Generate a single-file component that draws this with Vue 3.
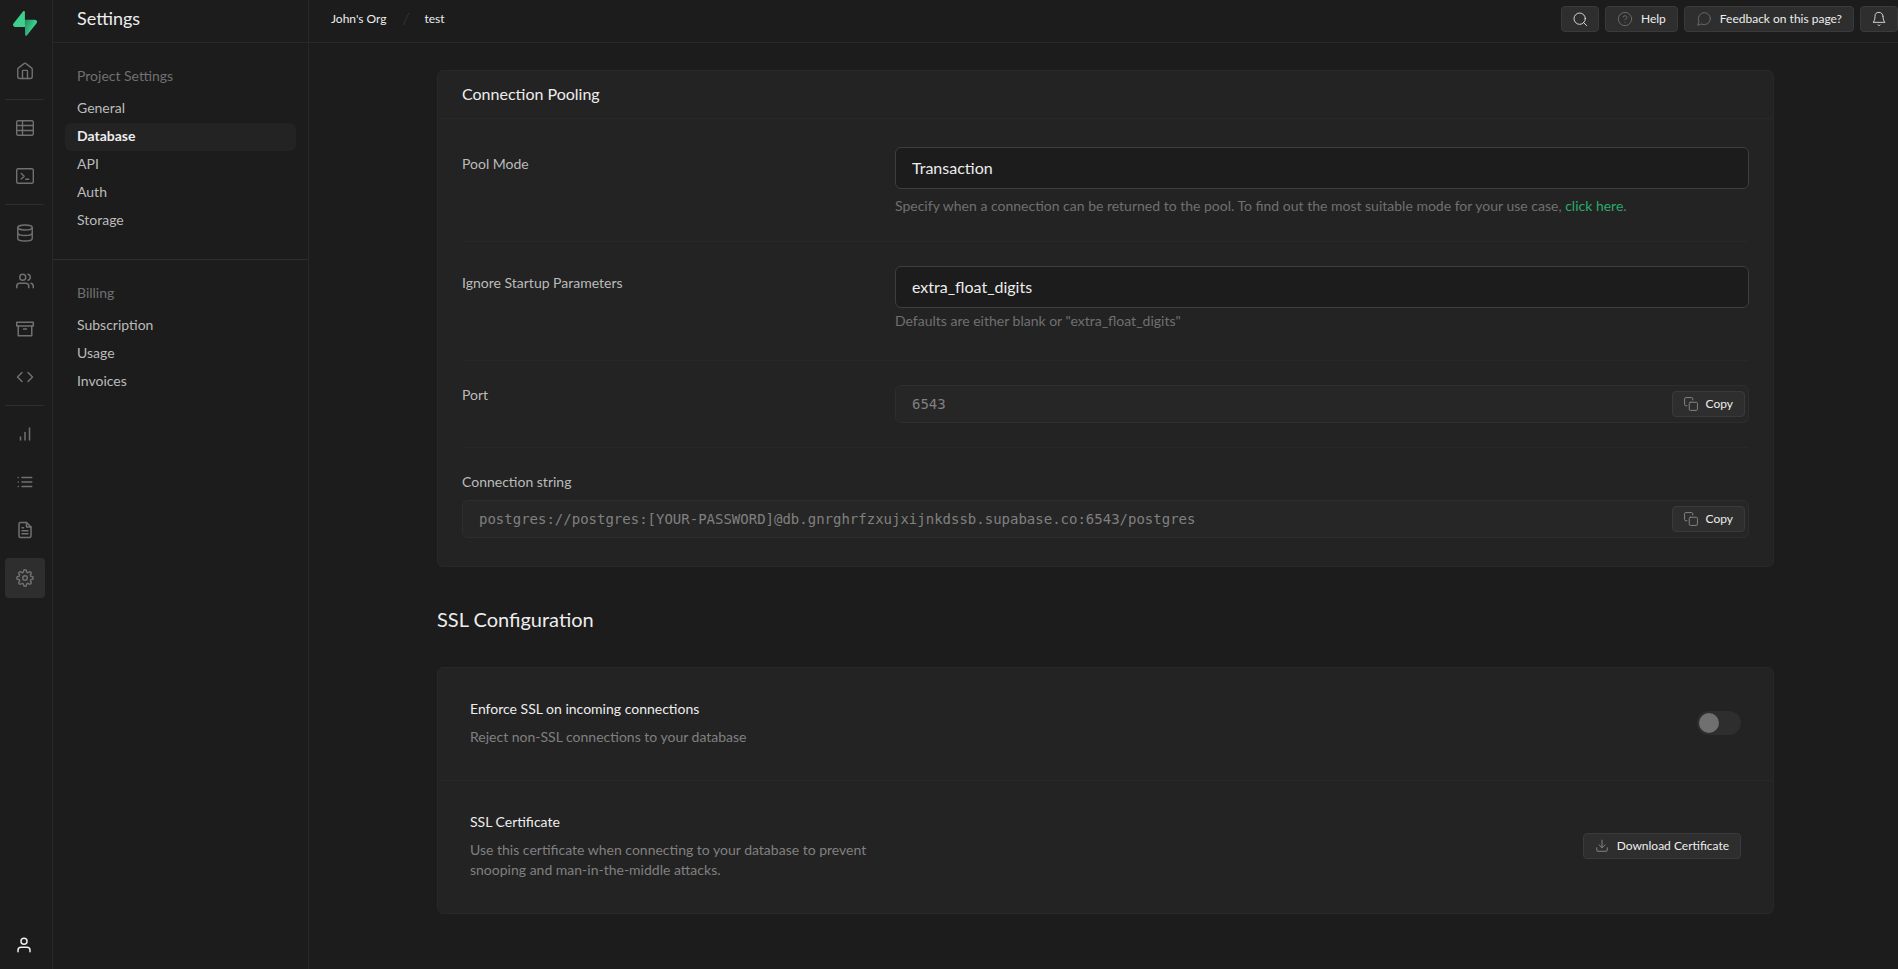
<template>
    <div class="layout">
        <nav class="rail" aria-label="Main">
            <a href="#" class="rail-item" aria-label="Supabase">
                <svg class="logo" viewBox="0 0 109 113" fill="none">
                    <defs>
                        <linearGradient id="bolt" x1="53.97" y1="54.97" x2="94.16" y2="71.83"
                            gradientUnits="userSpaceOnUse">
                            <stop stop-color="#249361" />
                            <stop offset="1" stop-color="#3ECF8E" />
                        </linearGradient>
                    </defs>
                    <path
                        d="M63.7 110.3C60.8 113.9 55 111.9 55 107.3L54 40H99.2C107.4 40 112 49.5 106.9 55.9L63.7 110.3Z"
                        fill="url(#bolt)" />
                    <path
                        d="M45.3 2C48.2 -1.5 54 .4 54 5L54.5 72.3H9.8C1.6 72.3 -2.9 62.8 2.2 56.4L45.3 2Z"
                        fill="#3ECF8E" />
                </svg>
            </a>
            <template v-for="(group, index) in railGroups" :key="index">
                <hr v-if="index > 0" class="rail-line" />
                <a v-for="item in group" :key="item.name" href="#" class="rail-item"
                    :class="{ active: item.name === 'Settings' }" :aria-label="item.name">
                    <svg :class="item.box === 20 ? 'icon-custom' : 'icon-rail'"
                        :viewBox="`0 0 ${item.box || 24} ${item.box || 24}`">
                        <path v-for="d in item.paths" :key="d" :d="d" />
                    </svg>
                </a>
            </template>
            <button type="button" class="rail-item account" aria-label="Account">
                <svg class="icon-rail" viewBox="0 0 24 24">
                    <path d="M20 21v-2a4 4 0 0 0-4-4H8a4 4 0 0 0-4 4v2" />
                    <circle cx="12" cy="7" r="4" />
                </svg>
            </button>
        </nav>

        <aside class="side">
            <div class="side-title">
                <h1>Settings</h1>
            </div>
            <section v-for="menu in menus" :key="menu.title" class="menu">
                <h2>{{ menu.title }}</h2>
                <ul>
                    <li v-for="link in menu.links" :key="link">
                        <a href="#" :class="{ current: link === activeLink }" @click.prevent="activeLink = link">{{ link }}</a>
                    </li>
                </ul>
            </section>
        </aside>

        <div class="page">
            <header class="topbar">
                <div class="crumbs">
                    <a href="#">John's Org</a>
                    <svg class="slash" viewBox="0 0 24 24">
                        <path d="M16 3.5L8 20.5" />
                    </svg>
                    <a href="#">test</a>
                </div>
                <div class="actions">
                    <button type="button" class="btn square" aria-label="Search">
                        <svg class="icon-top bright" viewBox="0 0 24 24">
                            <circle cx="11.5" cy="11.5" r="8.5" />
                            <path d="M22 22l-4.5-4.5" />
                        </svg>
                    </button>
                    <button type="button" class="btn">
                        <svg class="icon-top" viewBox="0 0 24 24">
                            <circle cx="12" cy="12" r="10" />
                            <path d="M9.1 9a3 3 0 0 1 5.8 1c0 2-3 3-3 3M12 17h.01" />
                        </svg>
                        Help
                    </button>
                    <button type="button" class="btn">
                        <svg class="icon-top" viewBox="0 0 24 24">
                            <path
                                d="M21.5 11.5a9 9 0 0 1-1 4 9 9 0 0 1-8 5 9 9 0 0 1-4-1L2.5 21.5l2-6a9 9 0 0 1-1-4 9 9 0 0 1 5-8 9 9 0 0 1 4-1h.5a9 9 0 0 1 8.5 8.5z" />
                        </svg>
                        Feedback on this page?
                    </button>
                    <button type="button" class="btn square" aria-label="Notifications">
                        <svg class="icon-top bright" viewBox="0 0 24 24">
                            <path d="M18 8A6 6 0 0 0 6 8c0 7-3 9-3 9h18s-3-2-3-9M13.7 21a2 2 0 0 1-3.4 0" />
                        </svg>
                    </button>
                </div>
            </header>

            <main class="content">
                <section class="card">
                    <h2 class="card-title">Connection Pooling</h2>
                    <div class="rows">
                        <div class="row">
                            <label for="pool-mode" class="row-label">Pool Mode</label>
                            <div class="row-field">
                                <select id="pool-mode" v-model="poolMode" class="control">
                                    <option>Transaction</option>
                                    <option>Session</option>
                                    <option>Statement</option>
                                </select>
                                <p class="hint spaced">Specify when a connection can be returned to the pool. To find out
                                    the most suitable mode for your use case, <a href="#">click here</a>.</p>
                            </div>
                        </div>
                        <div class="row">
                            <label for="ignore-params" class="row-label">Ignore Startup Parameters</label>
                            <div class="row-field tall">
                                <input id="ignore-params" v-model="ignoreParams" type="text" class="control" />
                                <p class="hint">Defaults are either blank or "extra_float_digits"</p>
                            </div>
                        </div>
                        <div class="row">
                            <label for="port" class="row-label top">Port</label>
                            <div class="row-field copy-box">
                                <input id="port" type="text" readonly value="6543" />
                                <button type="button" class="btn" @click="copy('6543')">
                                    <svg class="icon-small" viewBox="0 0 24 24">
                                        <rect x="9" y="9" width="14" height="14" rx="2" />
                                        <path d="M5 15H3a2 2 0 0 1-2-2V3a2 2 0 0 1 2-2h10a2 2 0 0 1 2 2v2" />
                                    </svg>
                                    Copy
                                </button>
                            </div>
                        </div>
                        <div class="row stacked">
                            <label for="connection" class="row-label top">Connection string</label>
                            <div class="copy-box">
                                <input id="connection" type="text" readonly :value="connection" />
                                <button type="button" class="btn" @click="copy(connection)">
                                    <svg class="icon-small" viewBox="0 0 24 24">
                                        <rect x="9" y="9" width="14" height="14" rx="2" />
                                        <path d="M5 15H3a2 2 0 0 1-2-2V3a2 2 0 0 1 2-2h10a2 2 0 0 1 2 2v2" />
                                    </svg>
                                    Copy
                                </button>
                            </div>
                        </div>
                    </div>
                </section>

                <h2 class="section-title">SSL Configuration</h2>

                <section class="card">
                    <div class="ssl-row">
                        <div class="ssl-text">
                            <label for="enforce-ssl">Enforce SSL on incoming connections</label>
                            <p>Reject non-SSL connections to your database</p>
                        </div>
                        <input id="enforce-ssl" v-model="enforceSsl" type="checkbox" role="switch" class="toggle" />
                    </div>
                    <div class="ssl-row">
                        <div class="ssl-text">
                            <h3>SSL Certificate</h3>
                            <p>Use this certificate when connecting to your database to prevent snooping and
                                man-in-the-middle attacks.</p>
                        </div>
                        <button type="button" class="btn">
                            <svg class="icon-small" viewBox="0 0 24 24">
                                <path d="M21 15v4a2 2 0 0 1-2 2H5a2 2 0 0 1-2-2v-4M7 10l5 5 5-5M12 15V2" />
                            </svg>
                            Download Certificate
                        </button>
                    </div>
                </section>
            </main>
        </div>
    </div>
</template>

<script setup>
import { ref } from 'vue';

const railGroups = [
    [
        {
            name: 'Home',
            box: 20,
            paths: [
                'M2.75 8.2v7.3a2 2 0 0 0 2 2h10.5a2 2 0 0 0 2-2V8.2a1.5 1.5 0 0 0-.5-1.1L11 2.6a1.5 1.5 0 0 0-2 0L3.3 7.1a1.5 1.5 0 0 0-.55 1.1z',
                'M7.5 17.5V10a.6.6 0 0 1 .6-.6h3.8a.6.6 0 0 1 .6.6v7.5',
            ],
        },
    ],
    [
        {
            name: 'Table Editor',
            box: 20,
            paths: [
                'M3.2 2.75h13.6a1.5 1.5 0 0 1 1.5 1.5v11.5a1.5 1.5 0 0 1-1.5 1.5H3.2a1.5 1.5 0 0 1-1.5-1.5V4.25a1.5 1.5 0 0 1 1.5-1.5z',
                'M1.7 7.5h16.6M1.7 12.5h16.6M7.5 2.75v14.5',
            ],
        },
        {
            name: 'SQL Editor',
            box: 20,
            paths: [
                'M3.2 2.75h13.6a1.5 1.5 0 0 1 1.5 1.5v11.5a1.5 1.5 0 0 1-1.5 1.5H3.2a1.5 1.5 0 0 1-1.5-1.5V4.25a1.5 1.5 0 0 1 1.5-1.5z',
                'M6.2 7.5l3 2.7-3 2.7M10.7 13.2h3',
            ],
        },
    ],
    [
        {
            name: 'Database',
            box: 20,
            paths: [
                'M17.25 4.5c0 1.4-3.2 2.5-7.25 2.5S2.75 5.9 2.75 4.5 5.95 2 10 2s7.25 1.1 7.25 2.5z',
                'M2.75 4.5v11c0 1.4 3.2 2.5 7.25 2.5s7.25-1.1 7.25-2.5v-11',
                'M2.75 10c0 1.4 3.2 2.5 7.25 2.5s7.25-1.1 7.25-2.5',
            ],
        },
        {
            name: 'Authentication',
            paths: [
                'M17 21v-2a4 4 0 0 0-4-4H5a4 4 0 0 0-4 4v2',
                'M13 7a4 4 0 1 1-8 0 4 4 0 0 1 8 0z',
                'M23 21v-2a4 4 0 0 0-3-3.87M16 3.13a4 4 0 0 1 0 7.75',
            ],
        },
        {
            name: 'Storage',
            paths: ['M21 8v13H3V8', 'M1 3h22v5H1z', 'M10 12h4'],
        },
        {
            name: 'Edge Functions',
            paths: ['M16 18l6-6-6-6', 'M8 6l-6 6 6 6'],
        },
    ],
    [
        {
            name: 'Reports',
            paths: ['M12 20V10', 'M18 20V4', 'M6 20v-4'],
        },
        {
            name: 'Logs',
            paths: ['M8 6h13M8 12h13M8 18h13', 'M3 6h.01M3 12h.01M3 18h.01'],
        },
        {
            name: 'API Docs',
            paths: [
                'M14 2H6a2 2 0 0 0-2 2v16a2 2 0 0 0 2 2h12a2 2 0 0 0 2-2V8z',
                'M14 2v6h6',
                'M16 13H8M16 17H8M10 9H8',
            ],
        },
        {
            name: 'Settings',
            paths: [
                'M15 12a3 3 0 1 1-6 0 3 3 0 0 1 6 0z',
                'M19.4 15a1.65 1.65 0 0 0 .33 1.82l.06.06a2 2 0 1 1-2.83 2.83l-.06-.06a1.65 1.65 0 0 0-2.8 1.17V21a2 2 0 0 1-4 0v-.09A1.65 1.65 0 0 0 9 19.4a1.65 1.65 0 0 0-1.82.33l-.06.06a2 2 0 1 1-2.83-2.83l.06-.06A1.65 1.65 0 0 0 3.18 14H3a2 2 0 0 1 0-4h.09A1.65 1.65 0 0 0 4.6 9a1.65 1.65 0 0 0-.33-1.82l-.06-.06a2 2 0 1 1 2.83-2.83l.06.06A1.65 1.65 0 0 0 9 4.68 1.65 1.65 0 0 0 10 3.17V3a2 2 0 0 1 4 0v.09a1.65 1.65 0 0 0 2.82 1.26l.06-.06a2 2 0 1 1 2.83 2.83l-.06.06A1.65 1.65 0 0 0 20.83 10H21a2 2 0 0 1 0 4h-.09a1.65 1.65 0 0 0-1.51 1z',
            ],
        },
    ],
];

const menus = [
    { title: 'Project Settings', links: ['General', 'Database', 'API', 'Auth', 'Storage'] },
    { title: 'Billing', links: ['Subscription', 'Usage', 'Invoices'] },
];

const activeLink = ref('Database');
const poolMode = ref('Transaction');
const ignoreParams = ref('extra_float_digits');
const enforceSsl = ref(false);
const connection = 'postgres://postgres:[YOUR-PASSWORD]@db.gnrghrfzxujxijnkdssb.supabase.co:6543/postgres';

const copy = (text) => {
    navigator.clipboard?.writeText(text);
};
</script>

<style>
body {
    background: #1c1c1c;
}
</style>

<style scoped>
* {
    box-sizing: border-box;
}

.layout {
    display: flex;
    min-height: 100vh;
    background: #1c1c1c;
    color: #ededed;
    font-family: Lato, "Open Sans", sans-serif;
    font-size: 14px;
    line-height: 20px;
}

h1,
h2,
h3,
p,
ul {
    margin: 0;
    padding: 0;
    font-weight: 400;
    list-style: none;
}

a {
    color: inherit;
    text-decoration: none;
}

button,
input,
select {
    font-family: inherit;
    color: inherit;
}

svg {
    flex: none;
    fill: none;
    stroke: currentColor;
    stroke-linecap: round;
    stroke-linejoin: round;
}

.rail {
    display: flex;
    flex: none;
    flex-direction: column;
    gap: 8px;
    width: 53px;
    padding: 3px 7px 4px 5px;
    border-right: 1px solid #282828;
}

.rail-item {
    display: flex;
    align-items: center;
    justify-content: center;
    width: 40px;
    height: 40px;
    border-radius: 4px;
    color: #707070;
}

.rail-item.active {
    background: #2e2e2e;
}

.rail-line {
    width: 39px;
    height: 1px;
    margin: 0;
    border: 0;
    background: #2e2e2e;
}

.account {
    margin-top: auto;
    padding: 0 2px 0 0;
    border: 0;
    background: none;
    color: #ededed;
}

.logo {
    width: 24px;
    height: 25px;
    stroke: none;
}

.icon-rail {
    width: 18px;
    height: 18px;
    stroke-width: 2;
}

.icon-custom {
    width: 20px;
    height: 20px;
    stroke-width: 1.4;
}

.side {
    flex: none;
    width: 256px;
    border-right: 1px solid #282828;
}

.side-title {
    display: flex;
    align-items: center;
    height: 43px;
    padding: 0 24px 6px;
    border-bottom: 1px solid #282828;
}

.side-title h1 {
    font-size: 18px;
}

.menu {
    padding: 23px 12px 24px;
}

.menu + .menu {
    border-top: 1px solid #2e2e2e;
}

.menu h2 {
    padding: 0 12px 9px;
    color: #707070;
    font-size: 14px;
}

.menu a {
    display: block;
    padding: 3px 12px 5px;
    border-radius: 6px;
    color: #bbbbbb;
}

.menu a.current {
    background: #232323;
    color: #ededed;
    font-weight: 700;
}

.page {
    flex: 1;
    min-width: 0;
}

.topbar {
    display: flex;
    align-items: center;
    justify-content: space-between;
    height: 43px;
    padding: 0 0 4px 22px;
    border-bottom: 1px solid #282828;
}

.crumbs {
    display: flex;
    align-items: center;
    gap: 11px;
    font-size: 12px;
}

.slash {
    width: 16px;
    height: 16px;
    color: #3e3e3e;
    stroke-width: 1;
}

.actions {
    display: flex;
    gap: 6px;
}

.btn {
    display: flex;
    flex: none;
    align-items: center;
    gap: 8px;
    height: 26px;
    padding: 0 11px;
    border: 1px solid #3a3a3a;
    border-radius: 4px;
    background: #2e2e2e;
    color: #ededed;
    font-size: 12px;
    line-height: 16px;
    cursor: pointer;
}

.btn.square {
    padding: 0 10px;
}

.icon-top {
    width: 16px;
    height: 16px;
    color: #707070;
    stroke-width: 1.3;
}

.bright {
    color: #ededed;
}

.icon-small {
    width: 14px;
    height: 14px;
    color: #8f8f8f;
    stroke-width: 1.5;
}

.content {
    padding: 27px 124px 54px 128px;
}

.card {
    border: 1px solid #282828;
    border-radius: 6px;
    background: #232323;
}

.card-title {
    padding: 11px 24px 12px;
    border-bottom: 1px solid #282828;
    font-size: 16px;
    line-height: 24px;
}

.rows {
    padding: 4px 24px;
}

.row {
    display: grid;
    grid-template-columns: repeat(12, 1fr);
    column-gap: 12px;
    padding: 24px 0;
}

.row + .row {
    border-top: 1px solid #282828;
}

.row-label {
    grid-column: span 4;
    padding-top: 7px;
    color: #bbbbbb;
}

.row-label.top {
    padding-top: 0;
}

.row-field {
    grid-column: span 8;
}

.row-field.tall {
    min-height: 70px;
}

.row.stacked {
    display: flex;
    flex-direction: column;
    gap: 8px;
}

.control {
    display: block;
    width: 100%;
    height: 42px;
    padding: 0 16px 2px;
    border: 1px solid #3e3e3e;
    border-radius: 6px;
    background: #1c1c1c;
    color: #ededed;
    font-size: 16px;
    appearance: none;
}

.hint {
    padding: 3px 0 1px;
    color: #707070;
}

.hint.spaced {
    padding-top: 7px;
}

.hint a {
    color: #2aa96b;
}

.copy-box {
    display: flex;
    align-items: center;
    height: 38px;
    padding-right: 3px;
    border: 1px solid #2e2e2e;
    border-radius: 6px;
    background: #262626;
}

.copy-box input {
    flex: 1;
    min-width: 0;
    padding: 0 16px;
    border: 0;
    outline: 0;
    background: none;
    color: #808080;
    font-family: "DejaVu Sans Mono", monospace;
    font-size: 14px;
}

.section-title {
    padding: 38px 0 34px;
    font-size: 20px;
    line-height: 28px;
}

.ssl-row {
    display: flex;
    align-items: center;
    justify-content: space-between;
    padding: 31px 32px 33px;
}

.ssl-row + .ssl-row {
    border-top: 1px solid #282828;
}

.ssl-text {
    display: flex;
    flex-direction: column;
    gap: 8px;
    max-width: 432px;
}

.ssl-text h3 {
    font-size: 14px;
}

.ssl-text p {
    color: #808080;
}

.toggle {
    display: flex;
    flex: none;
    width: 44px;
    height: 24px;
    margin: 0;
    padding: 2px;
    border-radius: 12px;
    background: #2e2e2e;
    appearance: none;
    cursor: pointer;
}

.toggle::before {
    content: "";
    width: 20px;
    height: 20px;
    border-radius: 50%;
    background: #707070;
}

.toggle:checked {
    justify-content: flex-end;
    background: #2aa96b;
}
</style>
